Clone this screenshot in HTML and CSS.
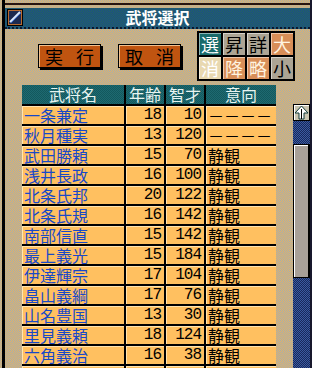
FILE: index.html
```html
<!DOCTYPE html>
<html lang="ja">
<head>
    <meta charset="UTF-8">
    <meta name="viewport" content="width=device-width, initial-scale=1.0">
    <title>武将選択</title>
    <link rel="stylesheet" href="styles.css">
</head>
<body>
    <div class="window">
        <div class="topline"></div>
        <div class="titlebar">
            <span class="sysicon">
                <svg width="16" height="17" viewBox="0 0 16 17">
                    <rect x="0" y="0" width="16" height="17" fill="#000"/>
                    <rect x="1" y="1" width="14" height="15" fill="#b86a30"/>
                    <rect x="2" y="2" width="12" height="13" fill="#1c2a50"/>
                    <line x1="3" y1="13" x2="13" y2="3" stroke="#d8e8ff" stroke-width="2"/>
                    <line x1="4" y1="14" x2="14" y2="4" stroke="#3060c0" stroke-width="1"/>
                </svg>
            </span>
            <h1>武将選択</h1>
        </div>

        <div class="controls">
            <button class="cmd">実<span class="sp"></span>行</button>
            <button class="cmd">取<span class="sp"></span>消</button>
            <div class="toggles">
                <span class="tg on">選</span>
                <span class="tg gray">昇</span>
                <span class="tg gray">詳</span>
                <span class="tg warm">大</span>
                <span class="tg off">消</span>
                <span class="tg warm">降</span>
                <span class="tg warm">略</span>
                <span class="tg gray">小</span>
            </div>
        </div>

        <div class="content">
            <div class="list">
                <div class="hd">武将名</div><div class="hd">年齢</div><div class="hd">智才</div><div class="hd">意向</div>

                <div class="name">一条兼定</div><div class="num">18</div><div class="num">10</div><div class="mind">－－－－</div>
                <div class="name">秋月種実</div><div class="num">13</div><div class="num">120</div><div class="mind">－－－－</div>
                <div class="name">武田勝頼</div><div class="num">15</div><div class="num">70</div><div class="mind">静観</div>
                <div class="name">浅井長政</div><div class="num">16</div><div class="num">100</div><div class="mind">静観</div>
                <div class="name">北条氏邦</div><div class="num">20</div><div class="num">122</div><div class="mind">静観</div>
                <div class="name">北条氏規</div><div class="num">16</div><div class="num">142</div><div class="mind">静観</div>
                <div class="name">南部信直</div><div class="num">15</div><div class="num">142</div><div class="mind">静観</div>
                <div class="name">最上義光</div><div class="num">15</div><div class="num">184</div><div class="mind">静観</div>
                <div class="name">伊達輝宗</div><div class="num">17</div><div class="num">104</div><div class="mind">静観</div>
                <div class="name">畠山義綱</div><div class="num">17</div><div class="num">76</div><div class="mind">静観</div>
                <div class="name">山名豊国</div><div class="num">13</div><div class="num">30</div><div class="mind">静観</div>
                <div class="name">里見義頼</div><div class="num">18</div><div class="num">124</div><div class="mind">静観</div>
                <div class="name">六角義治</div><div class="num">16</div><div class="num">38</div><div class="mind">静観</div>
                <div class="name">大友義統</div><div class="num">14</div><div class="num">44</div><div class="mind">静観</div>
            </div>

            <div class="scrollbar">
                <div class="arrow">
                    <svg width="15" height="15" viewBox="0 0 15 15">
                        <polygon points="7.5,1 14,8 10,8 10,14 5,14 5,8 1,8" fill="#fff" stroke="#103838" stroke-width="1"/>
                        <line x1="7.5" y1="4" x2="7.5" y2="14" stroke="#000" stroke-width="1"/>
                    </svg>
                </div>
                <div class="track">
                    <div class="thumb"></div>
                </div>
            </div>
        </div>
    </div>
</body>
</html>
```

FILE: styles.css
```css
html, body {
    margin: 0;
    padding: 0;
}
body {
    width: 312px;
    height: 368px;
    overflow: hidden;
    font-family: "Noto Sans CJK JP", "DejaVu Sans", sans-serif;
    background-color: #c8b488;
    background-image: repeating-conic-gradient(#e6b464 0 25%, #a4acb0 0 50%);
    background-size: 2px 2px;
}
.window {
    margin-left: 2px;
    height: 368px;
    border-left: 3px solid #000;
    border-right: 2px solid #18182c;
    box-sizing: border-box;
    overflow: hidden;
}
.topline {
    height: 3px;
    border-bottom: 2px solid #281410;
    margin-bottom: 3px;
}
.titlebar {
    display: flex;
    align-items: center;
    height: 19px;
    padding-left: 2px;
    border-bottom: 2px dotted #0a1830;
    background-color: #1f5280;
    background-image: repeating-conic-gradient(#1c4a8a 0 25%, #23665e 0 50%);
    background-size: 2px 2px;
}
.sysicon {
    display: flex;
    width: 16px;
    height: 17px;
}
.titlebar h1 {
    flex: 1;
    margin: 0;
    padding-right: 18px;
    text-align: center;
    color: #fff;
    font-size: 16px;
    font-weight: bold;
    line-height: 19px;
}
.controls {
    display: flex;
    align-items: center;
    padding: 2px 0 4px 33px;
}
.cmd {
    display: flex;
    justify-content: center;
    align-items: center;
    width: 63px;
    height: 24px;
    margin: 0 17px 0 0;
    padding: 0;
    font-family: inherit;
    font-size: 18px;
    line-height: 18px;
    color: #000;
    background: #c05410;
    border: 1px solid #000;
    box-shadow: inset 1px 1px 0 #f0c090, 2px 2px 0 #000;
    cursor: pointer;
}
.cmd .sp {
    display: inline-block;
    width: 13px;
}
.toggles {
    display: grid;
    grid-template-columns: repeat(4, 22px);
    grid-template-rows: repeat(2, 22px);
    gap: 2px;
    padding: 2px;
    margin-left: -1px;
    background: #000;
}
.tg {
    display: flex;
    justify-content: center;
    align-items: center;
    font-size: 18px;
    line-height: 18px;
    box-shadow: inset 1px 1px 0 rgba(255,255,255,0.5);
}
.tg.on {
    background: #186a6a;
    color: #fff;
}
.tg.gray {
    background: #aca494;
    color: #000;
}
.tg.warm {
    background: #d88e58;
    color: #fff4e0;
}
.tg.off {
    background: #e8d8b0;
    color: #fff;
}
.content {
    display: flex;
    align-items: flex-start;
    height: 284px;
    overflow: hidden;
    padding-left: 17px;
}
.list {
    display: grid;
    grid-template-columns: 102px 38px 38px 70px;
    grid-auto-rows: 18px;
    grid-template-rows: 19px;
    gap: 2px;
    width: 254px;
    background: #000;
}
.list > div {
    font-size: 16px;
    line-height: 18px;
    white-space: nowrap;
}
.hd {
    text-align: center;
    color: #e8f4f0;
    background-color: #175f66;
    background-image: repeating-conic-gradient(#13585e 0 25%, #1e6a70 0 50%);
    background-size: 2px 2px;
}
.list > .hd {
    line-height: 19px;
}
.name, .num, .mind {
    background: #ffc060;
    box-shadow: inset 1px 1px 0 #ffe4b0;
}
.name {
    padding-left: 2px;
    color: #1848c8;
}
.num {
    text-align: right;
    padding-right: 3px;
    font-family: "Liberation Mono", "DejaVu Sans Mono", monospace;
    letter-spacing: -1px;
    color: #000;
}
.mind {
    padding-left: 2px;
    color: #000;
}
.scrollbar {
    margin: 19px 0 0 17px;
    width: 17px;
    display: flex;
    flex-direction: column;
}
.arrow {
    display: flex;
    justify-content: center;
    align-items: center;
    height: 17px;
    box-sizing: border-box;
    border: 1px solid #000;
    background-color: #c8c4b0;
    box-shadow: inset 1px 1px 0 #fff;
}
.track {
    height: 248px;
    padding-top: 23px;
    box-sizing: border-box;
    background-color: #203a78;
    background-image: repeating-conic-gradient(#18285a 0 25%, #3a5aa0 0 50%);
    background-size: 2px 2px;
}
.thumb {
    height: 134px;
    box-sizing: border-box;
    border: 1px solid #000;
    border-right-width: 2px;
    background: #a8a098;
    box-shadow: inset 1px 1px 0 #fff;
}
```
